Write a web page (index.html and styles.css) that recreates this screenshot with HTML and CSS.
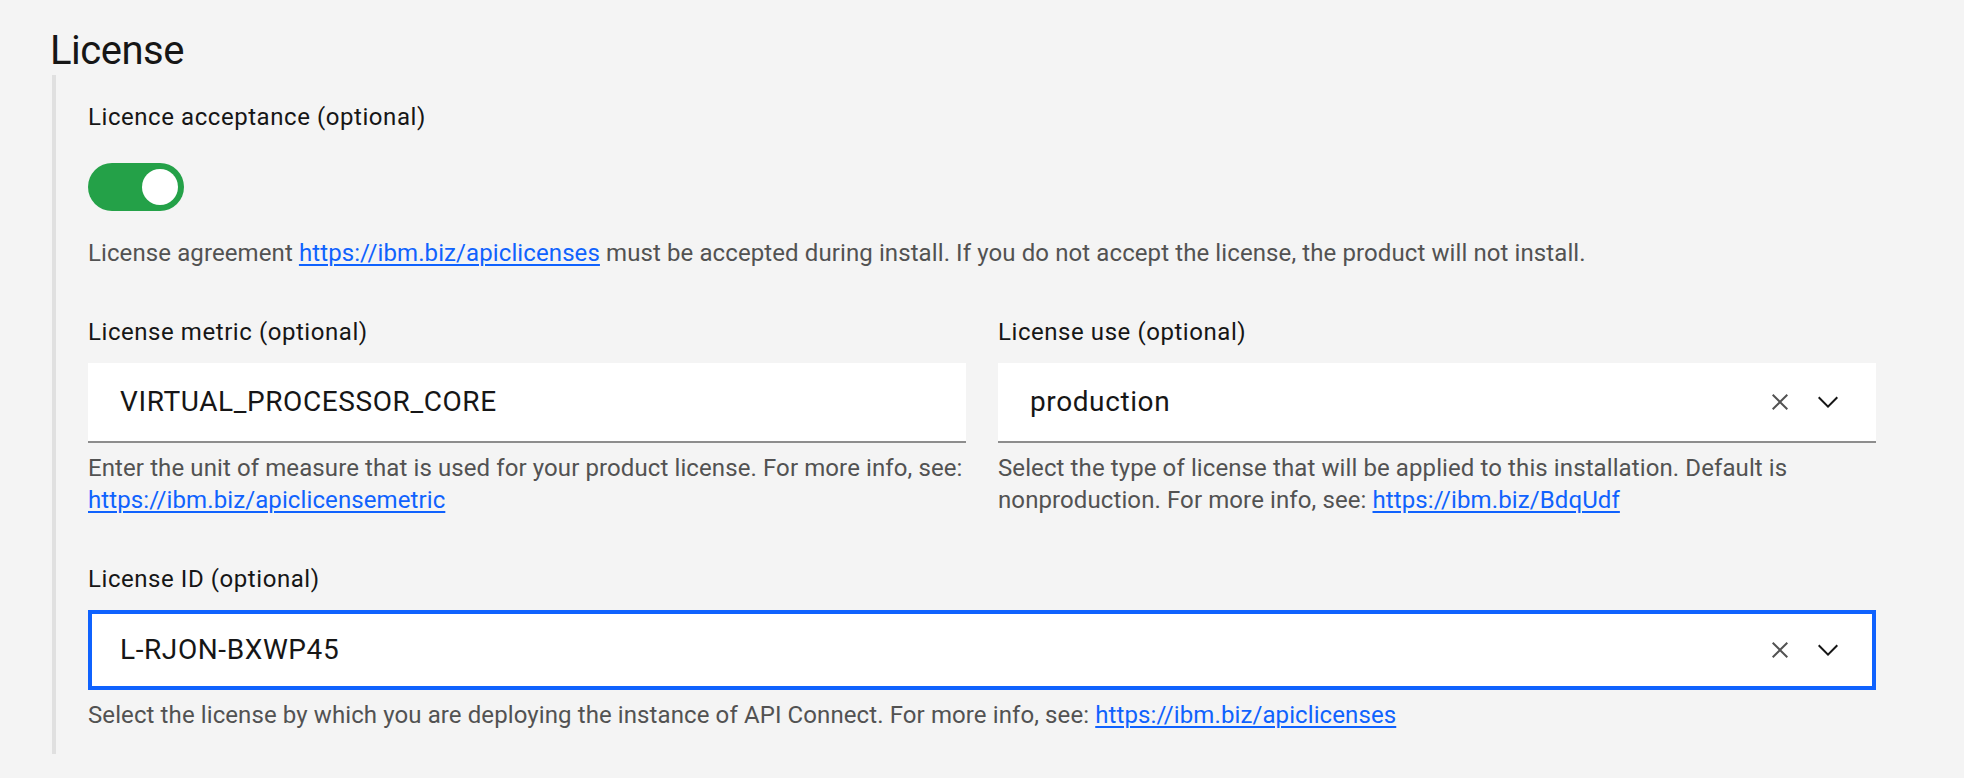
FILE: index.html
```html
<!DOCTYPE html>
<html lang="en">
<head>
<meta charset="utf-8">
<title>License</title>
<link rel="stylesheet" href="styles.css">
</head>
<body>
<main class="page">
  <h2 class="title">License</h2>
  <section class="group">
    <div class="field">
      <div class="label">Licence acceptance (optional)</div>
      <div class="toggle toggle--on" role="switch" aria-checked="true"><span class="toggle__knob"></span></div>
      <p class="helper helper--toggle">License agreement <a href="#" class="link">https://ibm.biz/apiclicenses</a> must be accepted during install. If you do not accept the license, the product will not install.</p>
    </div>

    <div class="row">
      <div class="field">
        <div class="label">License metric (optional)</div>
        <div class="input">
          <span class="input__value">VIRTUAL_PROCESSOR_CORE</span>
        </div>
        <p class="helper">Enter the unit of measure that is used for your product license. For more info, see: <a href="#" class="link">https://ibm.biz/apiclicensemetric</a></p>
      </div>
      <div class="field">
        <div class="label">License use (optional)</div>
        <div class="input combo">
          <span class="input__value">production</span>
          <span class="combo__icons">
            <span class="icon icon--clear"><svg width="32" height="32" viewBox="0 0 16 16"><path d="M12 4.7L11.3 4 8 7.3 4.7 4 4 4.7 7.3 8 4 11.3 4.7 12 8 8.7 11.3 12 12 11.3 8.7 8z"/></svg></span>
            <span class="icon icon--chevron"><svg width="32" height="32" viewBox="0 0 16 16"><path d="M8 11L3 6 3.7 5.3 8 9.6 12.3 5.3 13 6z"/></svg></span>
          </span>
        </div>
        <p class="helper">Select the type of license that will be applied to this installation. Default is nonproduction. For more info, see: <a href="#" class="link">https://ibm.biz/BdqUdf</a></p>
      </div>
    </div>

    <div class="field field--last">
      <div class="label">License ID (optional)</div>
      <div class="input combo input--focus">
        <span class="input__value">L-RJON-BXWP45</span>
        <span class="combo__icons">
          <span class="icon icon--clear"><svg width="32" height="32" viewBox="0 0 16 16"><path d="M12 4.7L11.3 4 8 7.3 4.7 4 4 4.7 7.3 8 4 11.3 4.7 12 8 8.7 11.3 12 12 11.3 8.7 8z"/></svg></span>
          <span class="icon icon--chevron"><svg width="32" height="32" viewBox="0 0 16 16"><path d="M8 11L3 6 3.7 5.3 8 9.6 12.3 5.3 13 6z"/></svg></span>
        </span>
      </div>
      <p class="helper">Select the license by which you are deploying the instance of API Connect. For more info, see: <a href="#" class="link">https://ibm.biz/apiclicenses</a></p>
    </div>
  </section>
</main>
</body>
</html>
```
FILE: styles.css
```css
* { box-sizing: border-box; }

html, body {
  margin: 0;
  padding: 0;
  background: #f4f4f4;
}

body {
  font-family: Roboto, "Liberation Sans", sans-serif;
  color: #161616;
  height: 778px;
  overflow: hidden;
}

.page {
  padding: 27px 88px 0 52px;
}

.title {
  margin: 0 0 0 -2px;
  font-size: 40px;
  line-height: 48px;
  font-weight: 400;
  letter-spacing: -0.5px;
  color: #161616;
}

.group {
  border-left: 4px solid #e0e0e0;
  padding: 26px 0 23px 32px;
}

.label {
  font-size: 24px;
  line-height: 32px;
  letter-spacing: 0.56px;
  color: #161616;
  margin-bottom: 15px;
}

.field + .row,
.row + .field {
  margin-top: 47px;
}

.field--last {
  margin-top: 48px;
}

.row {
  display: grid;
  grid-template-columns: 1fr 1fr;
  column-gap: 32px;
}

.toggle {
  width: 96px;
  height: 48px;
  border-radius: 24px;
  background: #8d8d8d;
  display: flex;
  align-items: center;
  padding: 0 6px;
  margin-top: 30px;
}

.toggle--on {
  background: #24a148;
  justify-content: flex-end;
}

.toggle__knob {
  width: 36px;
  height: 36px;
  border-radius: 50%;
  background: #ffffff;
}

.helper {
  margin: 9px 0 0;
  font-size: 24px;
  line-height: 32px;
  letter-spacing: 0.1px;
  color: #525252;
}

.helper--toggle {
  margin-top: 26px;
}

.link {
  color: #0f62fe;
  text-decoration: underline;
  text-underline-offset: 3px;
  text-decoration-thickness: 1.5px;
}

.input {
  height: 80px;
  background: #ffffff;
  border-bottom: 2px solid #8d8d8d;
  display: flex;
  align-items: center;
  justify-content: space-between;
  padding: 0 24px 0 32px;
}

.input__value {
  font-size: 28px;
  line-height: 36px;
  letter-spacing: 0.6px;
  color: #161616;
  white-space: nowrap;
}

.input--focus {
  border: 4px solid #0f62fe;
  padding: 0 20px 0 28px;
}

.combo__icons {
  display: flex;
  align-items: center;
}

.icon {
  width: 48px;
  height: 48px;
  display: flex;
  align-items: center;
  justify-content: center;
}

.icon svg {
  display: block;
}

.icon--clear svg {
  fill: #525252;
}

.icon--chevron svg {
  fill: #161616;
}
```
